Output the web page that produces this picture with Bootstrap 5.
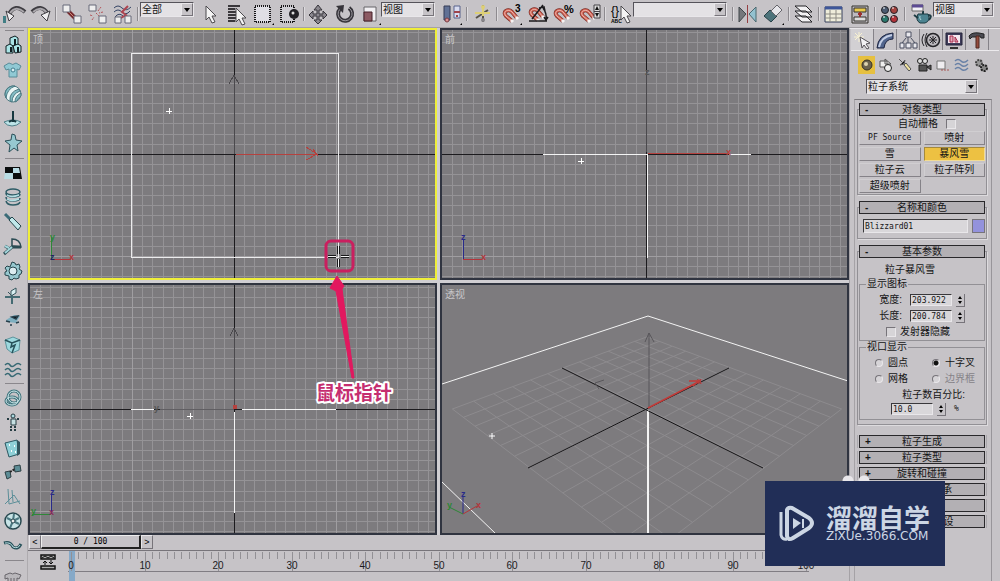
<!DOCTYPE html>
<html lang="zh-CN">
<head>
<meta charset="utf-8">
<meta name="viewport" content="width=device-width, initial-scale=1">
<title>粒子系统 - Blizzard01</title>
<link href="https://cdn.jsdelivr.net/npm/bootstrap@5.3.0/dist/css/bootstrap.min.css" rel="stylesheet">
<script src="https://cdn.jsdelivr.net/npm/bootstrap@5.3.0/dist/js/bootstrap.bundle.min.js"></script>
<style>
:root{--face:#c6c3c7;--dark:#7c797e;--lite:#e9e7ea;--ink:#151516}
body{background:var(--face);color:var(--ink);font-family:"Liberation Sans","Noto Sans CJK SC",sans-serif;font-size:10px;line-height:12px;height:100vh}
.tool{border:0;background:none;padding:0;color:var(--ink);flex:none;display:flex;align-items:center;justify-content:center}
.topbar{height:28px;border-bottom:1px solid #a5a2a6;padding-left:2px}
.topbar .tool{width:26px;height:26px}
.topbar .tool svg{width:24px;height:24px}
.vsep{width:4px;flex:none;height:14px;background:linear-gradient(90deg,transparent 1px,#8d8a8f 1px 2px,#dddbde 2px 3px,transparent 3px)}
.pick{position:relative;flex:none;height:15px;border:1px solid #55535a;border-right-color:var(--lite);border-bottom-color:var(--lite);background:#e4e2e5}
.pick select{appearance:none;background:none;border:0;border-radius:0;width:100%;height:13px;padding:0 14px 0 1px;font-size:10px;line-height:13px;color:var(--ink);display:block}
.pick::after{content:"";position:absolute;right:0;top:0;width:12px;height:13px;pointer-events:none;border:1px solid;border-color:var(--lite) #77747a #77747a var(--lite);background:var(--face)}
.pick::before{content:"";position:absolute;z-index:1;right:3px;top:5px;border:3px solid transparent;border-top:4px solid #000;border-bottom:0;pointer-events:none}
.w-pick{width:54px}.w-name{width:94px}.w-render{width:61px}
.pull{margin-left:-3px}
.sidebar{width:28px;padding-bottom:18px;border-right:1px solid #aeabaf}
.sidebar .tool{flex:1 1 0;min-height:0;width:26px}
.sidebar .tool svg{width:20px;height:20px}
.hsep{height:5px;flex:none;margin:0 3px 0 5px;background:linear-gradient(transparent 2px,#8a878c 2px 3px,transparent 3px)}
.partial{position:absolute;left:0;bottom:-8px;height:18px}
.views{display:grid;grid-template:minmax(0,1fr) minmax(0,1fr) / minmax(0,1fr) minmax(0,1fr);gap:3px;background:#d0ced2}
.view{border:2px solid #303440;background:#7d7b7e;overflow:hidden;min-height:0}
.view.active{border-color:#efee3a}
.view svg,.note svg{display:block;width:100%;height:100%}
.vlabel{font:10px "Noto Sans CJK SC",sans-serif;fill:#c7c6c8}
.axis{font:bold 9px "Liberation Sans",sans-serif}
.note{position:absolute;inset:0;pointer-events:none}
.slider{height:15px;padding-left:1px}
.slider button{border:1px solid;border-color:var(--lite) #77747a #77747a var(--lite);background:var(--face);padding:0;height:14px;font-size:9px;line-height:11px}
.slider .arrow{width:12px}.slider .knob{width:100px;border-width:1px 2px 2px 1px;border-color:#eee #222 #222 #eee}
.mono{font-family:"DejaVu Sans Mono",monospace;font-size:8px}
.slider .knob{font-size:8px}
.time{height:31px;border-top:1px solid #77747a}
.keys{width:40px}
.time svg{display:block}.time .ruler{flex:1;min-width:0;height:30px}
.ruler text{font:10px "Liberation Sans",sans-serif;text-anchor:middle;fill:#1c1b1d}
.panel{width:151px;border-left:1px solid #a5a2a6;border-top:1px solid #e9e7ea}
.tabs{height:22px;border-bottom:1px solid #eceaed;margin:0 1px 0 1px}
.tabs .tool{width:23px;border-right:1px solid #858288}
.tabs .tool:first-child{background:#d2d0d3}
.tabs svg{width:20px;height:20px}
.cats{height:20px;margin:4px 0 0 8px}
.cats .tool{width:19px}.cats svg{width:16px;height:16px}
.cats .on{width:17px;height:18px;background:#e6c040;margin-right:1px}
.kind{margin:4px 22px 5px 16px}
.rolls{margin:0 8px 0 4px;padding:9px 4px 0 2px;border-top:1px solid var(--dark);border-left:1px solid #a5a2a6;border-right:1px solid #98959a;flex:1;min-height:0;overflow:hidden}
.rollout{border:1px solid #929095;box-shadow:1px 1px 0 #dddbde;padding:0 1px;margin-bottom:12px}
.rhead{display:block;width:100%;height:13px;position:relative;margin-top:-7px;border:1px solid #29282b;background:#b3b0b4;color:var(--ink);padding:0;text-align:center;line-height:11px;font-size:10px}
.rhead b{position:absolute;left:5px;top:0}
.shutlist{margin-top:-2px}
.shutlist .rollout{border:0;border-left:1px solid #aaa8ac;border-right:1px solid #aaa8ac;padding:0 1px;margin-bottom:3px;box-shadow:none}
.shutlist .rhead{margin:0}
.auto{height:15px;padding-right:6px}
.kinds{display:grid;grid-template-columns:1fr 1fr;gap:2px 3px;padding-bottom:1px}
.kinds button{height:14px;padding:0;border:1px solid;border-color:#d0ced1 #858288 #858288 #d0ced1;background:var(--face);color:var(--ink);font-size:10px;line-height:12px}
.kinds button.on{background:#edc142;border-color:#a58a3c #f2dc94 #f2dc94 #a58a3c}
.kinds .mono,.rolls input[type=text]{font-family:"DejaVu Sans Mono",monospace;font-size:8px}
.rolls input[type=text]{border:1px solid;border-color:#39383b var(--lite) var(--lite) #39383b;border-radius:0;background:#d9d7da;color:var(--ink);padding:0 1px;line-height:10px}
.naming{padding:5px 0 5px 4px;gap:4px}
.nameval{height:14px;min-width:0;flex:1}
.swatch{width:13px;height:14px;border:1px solid #77747a;background:#9392dc;padding:0}
.num{width:42px;height:12px}
.spin{width:9px;height:13px;border:0;border-right:1px solid #77747a;border-bottom:1px solid #77747a;padding:0;background:var(--face);display:flex}
.rolls fieldset{border:1px solid #929095;padding:2px 3px 0;margin:0;min-width:0}
.rolls legend{float:none;width:auto;font-size:10px;line-height:12px;height:12px;margin:0 0 0 3px;padding:0 1px}
.line{height:16px;display:flex;align-items:center}
.caption{padding:4px 24px 0 0;line-height:16px}
.faint{color:#858288}
.tick{appearance:none;margin:0;border:1px solid;border-color:#77747a var(--lite) var(--lite) #77747a;background:#d6d4d7;width:10px;height:10px}
.dot{appearance:none;margin:0 5px 0 0;width:8px;height:8px;border-radius:50%;border:1px solid;border-color:#77747a var(--lite) var(--lite) #77747a;background:#d6d4d7}
.dot:checked{background:radial-gradient(#111 2px,#d6d4d7 3px)}
.brand{position:absolute;z-index:5;right:55px;bottom:15px;width:180px;height:85px;background:#212e57;color:#ccd6e4;padding-left:14px;gap:11px}
.brand::before{content:"";position:absolute;z-index:-1;left:77px;top:-6px;width:28px;height:6px;background:radial-gradient(circle at 6px 6px,#e9e7ea 5px,transparent 6px),radial-gradient(circle at 22px 6px,#e9e7ea 5px,transparent 6px)}
.brand .big{font:700 26px/26px "Noto Sans CJK SC",sans-serif}
.brand .site{font:12px/13px "DejaVu Sans",sans-serif}
</style>
</head>
<body class="d-flex flex-column overflow-hidden position-relative">
<svg width="0" height="0" class="position-absolute" aria-hidden="true">
<defs>
<g id="magnet"><path d="M12 18 6 13C2 9 8 5 12 9l5 6" fill="none" stroke="#6d2620" stroke-width="4"/><path d="M12 18 6 13C2 9 8 5 12 9l5 6" fill="none" stroke="#cc5d4f" stroke-width="3"/><path d="M12 18 6 13C2 9 8 5 12 9l5 6" fill="none" stroke="#f0bab0" stroke-width="1"/><path d="m11 17 2 2m3-5 2 2" stroke="#f5f3f3" stroke-width="3"/></g>
<g id="pot"><path d="M7 12h10q3 7-3 9H9q-5-3-2-9z" fill="#4c8390" stroke="#1d3b43"/><path d="M7 16 3 13M17 13q5 0 1 5M12 9v3" fill="none" stroke="#1d3b43" stroke-width="2"/><path d="M9 14q-1 2 1 4" fill="none" stroke="#b5d9dd"/></g>
<g id="cursor"><path d="m0 0 10 10H6l3 6-3 1-3-6-3 3z" fill="#f4f4f4" stroke="#4b494d"/></g>
</defs>
</svg>

<header class="topbar d-flex align-items-center flex-nowrap overflow-hidden flex-shrink-0" role="toolbar" aria-label="主工具栏">
<button class="tool" aria-label="撤销"><svg viewBox="0 0 24 24"><path d="M0 14h3v7H0z" fill="#417e85"/><path d="M6 12Q12 1 22 10" fill="none" stroke="#3f3d42" stroke-width="4"/><path d="M7 11Q13 3 21 10" fill="none" stroke="#aaa7ac" stroke-width="2"/><path d="m3 9 3 10 5-5z" fill="#efeef0" stroke="#3f3d42"/></svg></button>
<button class="tool" aria-label="重做"><svg viewBox="0 0 24 24"><path d="M3 10Q12 1 19 12" fill="none" stroke="#3f3d42" stroke-width="4"/><path d="M4 10Q12 3 18 11" fill="none" stroke="#aaa7ac" stroke-width="2"/><path d="m21 9-3 10-6-6z" fill="#efeef0" stroke="#3f3d42"/></svg></button>
<i class="vsep"></i>
<button class="tool" aria-label="链接"><svg viewBox="0 0 24 24"><path d="m9 9 8 8" stroke="#782a2e" stroke-width="4"/><path d="m9 9 8 8" stroke="#ce8a78" stroke-width="1"/><path d="M4 3h7v7H4zM15 14h7v7h-7z" fill="#eee" stroke="#666878"/></svg></button>
<button class="tool" aria-label="取消链接"><svg viewBox="0 0 24 24"><path d="M4 3h7v6H4zM14 14h7v7h-7z" fill="#eee" stroke="#666878"/><path d="m11 11 3 3M16 5l-3 4m5 1-4 1M5 13l3 1m-1 4 2-3" stroke="#b4555a" stroke-dasharray="2 1"/></svg></button>
<button class="tool" aria-label="绑定到空间扭曲"><svg viewBox="0 0 24 24"><path d="M3 6q4-4 8 0t9-1M3 10q4-4 8 0t8-1M4 15q4-5 8-1" fill="none" stroke="#344364" stroke-width="1"/><path d="m17 4-6 6 4 3-9 5" fill="none" stroke="#ad4550" stroke-width="2"/><path d="M4 15h6v6H4zM14 14h6v7h-6z" fill="#eee" stroke="#666878"/></svg></button>
<i class="vsep"></i>
<div class="pick w-pick mb-2 me-1"><select aria-label="选择过滤器"><option>全部</option></select></div>
<button class="tool" aria-label="选择对象"><svg viewBox="0 0 24 24"><use href="#cursor" x="7" y="4"/></svg></button>
<button class="tool" aria-label="按名称选择"><svg viewBox="0 0 24 24"><path d="M3 4h12M3 7h7M3 10h11M3 13h8M3 16h11M3 19h7" stroke="#39373b" stroke-width="2"/><use href="#cursor" x="11" y="6"/></svg></button>
<button class="tool" aria-label="矩形选择区域"><svg viewBox="0 0 24 24"><path d="M4 4h15v16H4z" fill="#e0dfe5" stroke="#171719" stroke-width="2" stroke-dasharray="1 1"/><path d="M23 21v2h-2z"/></svg></button>
<button class="tool" aria-label="窗口/交叉"><svg viewBox="0 0 24 24"><path d="M4 4h13v16H4z" fill="#d0cfd5" stroke="#171719" stroke-width="2" stroke-dasharray="1 1"/><circle cx="17" cy="12" r="5" fill="#222126"/><circle cx="16" cy="11" r="1.500" fill="#ddd"/></svg></button>
<i class="vsep"></i>
<button class="tool" aria-label="移动"><svg viewBox="0 0 24 24"><path d="m11 3 4 5h-3v4h4V9l4 4-4 4v-3h-4v4h3l-4 4-4-4h3v-4H6v3l-4-4 4-4v3h4V8H7z" fill="#8b888f" stroke="#36343a"/></svg></button>
<button class="tool" aria-label="旋转"><svg viewBox="0 0 24 24"><path d="M7 7a7 7 0 1 0 9-1" fill="none" stroke="#36343a" stroke-width="4"/><path d="M7 7a7 7 0 1 0 9-1" fill="none" stroke="#99969c" stroke-width="1"/><path d="m3 4 8-1-1 8z" fill="#36343a"/></svg></button>
<button class="tool" aria-label="缩放"><svg viewBox="0 0 24 24"><path d="M5 5h12v14H5z" fill="#f1eff2" stroke="#666469"/><path d="M5 10h8v9H5z" fill="#8c5a62" stroke="#462129"/><path d="M22 21v2h-2z"/></svg></button>
<div class="pick w-pick mb-2 pull me-1"><select aria-label="参考坐标系"><option>视图</option></select></div>
<button class="tool" aria-label="使用轴点中心"><svg viewBox="0 0 24 24"><path d="M4 4h6v14H4z" fill="#617195" stroke="#343b55"/><path d="M14 4h6v12h-6z" fill="#d8dcf0" stroke="#58628b"/><circle cx="7" cy="18" r="2" fill="#d89090" stroke="#7b3a42"/><path d="M14 10h6m-4 4h2" stroke="#9e454c" stroke-width="2"/><path d="M22 21v2h-2z"/></svg></button>
<i class="vsep"></i>
<button class="tool" aria-label="选择并操纵"><svg viewBox="0 0 24 24"><path d="M13 3v17M6 16l12-8" stroke="#565349" stroke-width="2"/><path d="M5 11h15M13 5v9" stroke="#ddcf75" stroke-width="2"/><circle cx="13" cy="5" r="2" fill="#ddcf75"/><circle cx="13" cy="18" r="2" fill="#87858a"/></svg></button>
<i class="vsep"></i>
<button class="tool" aria-label="捕捉开关"><svg viewBox="0 0 24 24"><use href="#magnet" x="0" y="1"/><text x="15" y="10" font-size="10" font-weight="bold">3</text><path d="M22 21v2h-2z"/></svg></button>
<button class="tool" aria-label="角度捕捉"><svg viewBox="0 0 24 24"><use href="#magnet" x="0" y="0"/><path d="M3 19h18M6 17 17 3m0 3q4 5 3 12m-7-12 5-1 1 4m-1 6 2 3 2-3" fill="none" stroke="#1c1b1e" stroke-width="1.500"/></svg></button>
<button class="tool" aria-label="百分比捕捉"><svg viewBox="0 0 24 24"><use href="#magnet" x="-1" y="1"/><text x="12" y="11" font-size="11" font-weight="bold">%</text></svg></button>
<button class="tool" aria-label="微调器捕捉"><svg viewBox="0 0 24 24"><use href="#magnet" x="-1" y="1"/><path d="M16 3h6v13h-6zM16 9.500h6" fill="#ddd" stroke="#444247"/><path d="m19 4 2 4h-4zm0 11 2-4h-4z" fill="#111"/></svg></button>
<i class="vsep"></i>
<button class="tool" aria-label="命名选择集"><svg viewBox="0 0 24 24"><text x="3" y="13" font-size="12">{}</text><text x="3" y="21" font-size="5" font-weight="bold">ABC</text><use href="#cursor" x="13" y="4"/></svg></button>
<div class="pick w-name mb-2 me-1"><select aria-label="命名选择集列表"><option></option></select></div>
<i class="vsep"></i>
<button class="tool" aria-label="镜像"><svg viewBox="0 0 24 24"><path d="m3 5 7 7-7 8z" fill="#74777b" stroke="#41474a"/><path d="m20 5-7 7 7 8z" fill="#93c1cf" stroke="#4a686f"/><path d="M11.500 3v18" stroke="#963e42"/></svg></button>
<button class="tool" aria-label="对齐"><svg viewBox="0 0 24 24"><path d="m2 14 6-6 7 6-6 6z" fill="#4d737b" stroke="#274047"/><path d="m9 9 6-6 5 5-6 6z" fill="#e7e6eb" stroke="#66656b"/><path d="M22 21v2h-2z"/></svg></button>
<i class="vsep"></i>
<button class="tool" aria-label="层管理器"><svg viewBox="0 0 24 24"><path d="M3 14h11l6 6H10zM3 9h11l6 6H10zM3 4h11l6 6H10z" fill="#f2f1f3" stroke="#232226"/></svg></button>
<i class="vsep"></i>
<button class="tool" aria-label="曲线编辑器"><svg viewBox="0 0 24 24"><path d="M3 5h17v15H3z" fill="#efedda" stroke="#36405e"/><path d="M3 6h17" stroke="#3e569a" stroke-width="3"/><path d="M8 8v12M3 12h17M3 16h17M14 8v12" stroke="#8d8b83"/></svg></button>
<button class="tool" aria-label="图解视图"><svg viewBox="0 0 24 24"><path d="M4 4h16v17H4z" fill="#bdbac0" stroke="#35332c"/><path d="M6 6h12v4H6z" fill="#ebcb4d" stroke="#35332c"/><path d="M6 15h12v4H6z" fill="#ddd" stroke="#35332c"/><path d="M12 10v5m-2-3h4" stroke="#9a302f" stroke-width="2"/></svg></button>
<i class="vsep"></i>
<button class="tool" aria-label="材质编辑器"><svg viewBox="0 0 24 24"><g stroke="#222228"><circle cx="7" cy="8" r="3.500" fill="#4b5b70"/><circle cx="16" cy="8" r="3.500" fill="#a5423e"/><circle cx="7" cy="17" r="3.500" fill="#2a776c"/><circle cx="16" cy="17" r="3.500" fill="#b23138"/></g><path d="M5 6h2m7 0h2m-11 9h2m7 0h2" stroke="#fff"/></svg></button>
<i class="vsep"></i>
<button class="tool" aria-label="渲染场景"><svg viewBox="0 0 24 24"><use href="#pot" x="3" y="0"/><path d="M4 3h11v6H4z" fill="#f2f1f6" stroke="#666"/><path d="M4 4h11" stroke="#5c4b93" stroke-width="3"/></svg></button>
<div class="pick w-render mb-2"><select aria-label="渲染视口"><option>视图</option></select></div>
<button class="tool" aria-label="快速渲染"><svg viewBox="0 0 24 24"><use href="#pot" x="4" y="0"/></svg></button>
</header>

<div class="d-flex flex-grow-1 overflow-hidden">
<nav class="sidebar d-flex flex-column flex-shrink-0 position-relative overflow-hidden" aria-label="reactor 工具栏">
<div class="hsep"></div>
<button class="tool" aria-label="刚体集合"><svg viewBox="0 0 20 20"><path d="m7 3 5-2 3 2v7l-4 1-4-1z" fill="#a9e4e6" stroke="#101e22"/><path d="m3 11 4-2 3 2v7H3zM10 11l5-2 3 2v6l-6 1z" fill="#a9e4e6" stroke="#101e22"/><path d="M12 4v6M8 12v5m7-5v5" stroke="#101e22" stroke-width="2"/></svg></button>
<button class="tool" aria-label="布料集合"><svg viewBox="0 0 20 20"><path d="m1 6 5-3q4 3 7 0l5 3-2 4-2-1v8H6V9L3 10z" fill="#90c9d4" stroke="#598c98"/><circle cx="10" cy="10" r="2" fill="#d8edf1" stroke="#3f7c8c"/></svg></button>
<button class="tool" aria-label="软体集合"><svg viewBox="0 0 20 20"><circle cx="10" cy="10" r="8" fill="#e9f5f5" stroke="#4b7881"/><path d="M7 17Q6 8 16 5l1 2Q9 10 9 18zM3 14Q4 5 12 2L9 2Q2 4 2 11zM12 18q0-6 6-9v3q-3 2-4 5z" fill="#83bdc5" stroke="#4b7881"/></svg></button>
<button class="tool" aria-label="绳索集合"><svg viewBox="0 0 20 20"><path d="M1 13q9-4 17 0-4 4-9 4t-8-4z" fill="#bde4e8" stroke="#4e7f89"/><path d="M10 2v11m-4 0q4-3 7 0" fill="none" stroke="#17383f" stroke-width="2"/></svg></button>
<button class="tool" aria-label="变形网格集合"><svg viewBox="0 0 20 20"><path d="m9 1 3 1 1 5 6 1-5 4 1 6-4-3-5 4 1-7-5-4 6-1z" fill="#96c8d0" stroke="#2b5059"/></svg></button>
<div class="hsep"></div>
<button class="tool" aria-label="平面"><svg viewBox="0 0 20 20"><path d="M2 4h15l2 12H2z" fill="#0b0d0e"/><path d="M10 5h6l1 5h-7zM2 10h8v6H1z" fill="#b9dce4"/></svg></button>
<button class="tool" aria-label="弹簧"><svg viewBox="0 0 20 20"><g fill="none" stroke="#2d5c66" stroke-width="1.500"><ellipse cx="10" cy="5" rx="7" ry="3"/><path d="M3 6q0 4 7 4t7-3M3 10q0 4 7 4t7-3M3 14q1 4 7 4t7-3"/></g><path d="M4 8q4 3 12 0M4 12q4 3 12 0" fill="none" stroke="#b2dfe3" stroke-width="1.500"/></svg></button>
<button class="tool" aria-label="线性缓冲器"><svg viewBox="0 0 20 20"><path d="m2 2 6 6" stroke="#3b6c78" stroke-width="3"/><path d="m6 8 3-3 9 9-3 4z" fill="#c0e8ea" stroke="#26464d"/></svg></button>
<button class="tool" aria-label="角度缓冲器"><svg viewBox="0 0 20 20"><path d="M9 9V2q8 0 9 8z" fill="#d5c9cd" stroke="#2b4b53" stroke-width="1.500"/><path d="m1 17 8-7h9M2 9l5 3" fill="none" stroke="#2b4b53" stroke-width="3"/><path d="m2 16 7-6M2 9l4 2" stroke="#a4d6dc" stroke-width="2"/></svg></button>
<button class="tool" aria-label="马达"><svg viewBox="0 0 20 20"><path d="m9 1 3 1 1 2 3-1 1 3-1 2 3 2-1 3-2 1v3l-3 1-2-1-2 2-3-1v-3l-4-1v-3l2-1-2-3 2-2 3 1z" fill="#97c8cf" stroke="#25454c"/><circle cx="10" cy="10" r="4" fill="#dbecf0" stroke="#25454c"/></svg></button>
<button class="tool" aria-label="风"><svg viewBox="0 0 20 20"><path d="M2 11h15M9 9v9" stroke="#456b73" stroke-width="2"/><path d="M8 10V5l5-3v5zM5 6l3 3" fill="#d7eef1" stroke="#35545b"/></svg></button>
<button class="tool" aria-label="玩具车"><svg viewBox="0 0 20 20"><path d="m3 10 8-5 6 1-4 7-8-1z" fill="#7fafc0"/><path d="m9 7 6-1-2 3zM3 11l4 1m0 3h2m4-2 3-1" stroke="#253d49" stroke-width="1.500"/></svg></button>
<button class="tool" aria-label="破裂"><svg viewBox="0 0 20 20"><path d="m2 5 8-3 7 3-1 10-7 3-5-4z" fill="#9ed9df" stroke="#5d939c"/><path d="M2 5l7 3 8-3M9 8l-1 4 4-2-3 8" fill="none" stroke="#28525b" stroke-width="1.500"/></svg></button>
<button class="tool" aria-label="水"><svg viewBox="0 0 20 20"><path d="M2 6q3-3 5 0t5 0 6 0M2 11q3-3 5 0t5 0 6 0M2 16q3-3 5 0t5 0 6 0" fill="none" stroke="#356873" stroke-width="1.500"/></svg></button>
<div class="hsep"></div>
<button class="tool" aria-label="约束解算器"><svg viewBox="0 0 20 20"><circle cx="11" cy="8" r="6" fill="none" stroke="#3f737c" stroke-width="3"/><ellipse cx="9" cy="12" rx="6" ry="4" fill="none" stroke="#3f737c" stroke-width="3"/><circle cx="11" cy="8" r="6" fill="none" stroke="#d3edf0"/><ellipse cx="9" cy="12" rx="6" ry="4" fill="none" stroke="#d3edf0"/></svg></button>
<button class="tool" aria-label="碎布玩偶"><svg viewBox="0 0 20 20"><circle cx="10" cy="3" r="2" fill="#abd9df" stroke="#263c43"/><path d="M8 6h5v6H8z" fill="#c5dfe2" stroke="#263c43"/><path d="M4 6h3m7 0h3M8 13v5m4-5v5" stroke="#263c43" stroke-width="2" stroke-dasharray="2 1"/></svg></button>
<button class="tool" aria-label="铰链"><svg viewBox="0 0 20 20"><path d="m2 5 12-3 2 14-10 3z" fill="#8fd0d7" stroke="#2c5761"/><path d="m14 2 3 2v12l-3 2" fill="#33565e"/><path d="M6 7h1m4 1h1m-4 5h1m3 1h1" stroke="#fff" stroke-width="2"/></svg></button>
<button class="tool" aria-label="点到点"><svg viewBox="0 0 20 20"><path d="m11 4 6-1 1 6-6 1zM2 10l5-1 1 6-4 2z" fill="#5d8d96" stroke="#2c3f44"/><path d="m7 10 5-3" stroke="#222" stroke-width="2" stroke-dasharray="2 1"/></svg></button>
<button class="tool" aria-label="棱柱"><svg viewBox="0 0 20 20"><path d="m5 2 1 15 11-3M9 3l1 12M2 17l9-9 6 9" fill="none" stroke="#5b8e98" stroke-width="1"/></svg></button>
<button class="tool" aria-label="车轮"><svg viewBox="0 0 20 20"><circle cx="10" cy="10" r="8" fill="#c8e4e7" stroke="#27474f" stroke-width="1.500"/><path d="m10 10-6-3m6 3 1-7m-1 7 6 3m-6-3-3 7m3-7 6-3" stroke="#4b7881" stroke-width="2"/><circle cx="10" cy="10" r="2" fill="#eee" stroke="#27474f"/></svg></button>
<button class="tool" aria-label="点到路径"><svg viewBox="0 0 20 20"><path d="M1 7q6-2 9 4 5 3 8-3" fill="none" stroke="#265059" stroke-width="3"/><path d="M2 7q6-1 8 4 5 2 7-2" fill="none" stroke="#bde0e4"/></svg></button>
<div class="hsep"></div>
<button class="tool partial" aria-label="布料修改器"><svg viewBox="0 0 20 20"><path d="m2 5 5-2q3 2 5 0l6 2-2 4-2-1v9H5V8L2 9zM8 8v9m3-9v9" fill="#b9b7bb" stroke="#68656b"/></svg></button>
</nav>

<main class="d-flex flex-column flex-grow-1 overflow-hidden">
<div class="views flex-grow-1 position-relative overflow-hidden">
<div class="view active"><svg viewBox="30 30 405 248" preserveAspectRatio="xMidYMid slice" shape-rendering="crispEdges">
<g data-grid="30,30,405,248,234,154"></g>
<path d="M234 30v248M30 154h405" stroke="#1c1b1e"/><path d="M131 53h207v204H131z" fill="none" stroke="#ececed"/>
<path d="M234 154V76m-5 8 5-9 5 9" fill="none" stroke="#4b494d"/><path d="M236 154h80m-10-7 11 7-11 6m7-11 5 7" fill="none" stroke="#b5413e"/>
<path d="M166 111h6m-3-3v6" stroke="#fff"/><text class="vlabel" x="33" y="43">顶</text>
<path d="M51 259v-22" stroke="#2e8737"/><path d="M51 259h20" stroke="#b4343a"/><text class="axis" x="50" y="240" fill="#2e8737">y</text><text class="axis" x="69" y="260" fill="#b4343a">x</text><text class="axis" x="50" y="260" fill="#1e2560">z</text>
</svg></div>
<div class="view"><svg viewBox="442 30 405 248" preserveAspectRatio="xMidYMid slice" shape-rendering="crispEdges">
<g data-grid="442,30,405,248,646,154"></g>
<path d="M646 30v248M442 154h405" stroke="#1c1b1e"/><path d="M646 152V70" stroke="#4b494d"/><path d="M543 154h104m82 0h22M647 154v104" stroke="#f4f4f4"/><path d="M648 153h80" stroke="#b5413e"/><text class="axis" x="726" y="155" fill="#b5413e">x</text><text class="axis" x="645" y="75" fill="#555">z</text>
<path d="M578 161h6m-3-3v6" stroke="#fff"/><text class="vlabel" x="445" y="43">前</text>
<path d="M463 259v-20" stroke="#282a8a"/><path d="M463 259h19" stroke="#b4343a"/><text class="axis" x="461" y="240" fill="#282a8a">z</text><text class="axis" x="481" y="260" fill="#b4343a">x</text>
</svg></div>
<div class="view"><svg viewBox="30 285 405 248" preserveAspectRatio="xMidYMid slice" shape-rendering="crispEdges">
<g data-grid="30,285,405,248,234,409"></g>
<path d="M234 285v248M30 409h405" stroke="#1c1b1e"/><path d="M234 405v-77m-4 8 4-8 4 8" fill="none" stroke="#4b494d"/><path d="M160 409h74" stroke="#605e62"/><path d="M131 409h23m88 0h94M234 412v101" stroke="#f4f4f4"/><text class="axis" x="154" y="411" fill="#555">y</text><path d="M233 405h4v4h-4z" fill="#b5413e"/>
<path d="M187 416h6m-3-3v6" stroke="#fff"/><text class="vlabel" x="33" y="298">左</text>
<path d="M51 514v-20" stroke="#282a8a"/><path d="M51 514H32" stroke="#2e8737"/><text class="axis" x="50" y="495" fill="#282a8a">z</text><text class="axis" x="31" y="514" fill="#2e8737">y</text><text class="axis" x="49" y="515" fill="#8c2b5b">x</text>
</svg></div>
<div class="view"><svg viewBox="442 285 405 248" preserveAspectRatio="xMidYMid slice">
<g id="persp"></g>
<path d="m442 384 206-68 200 65M442 482l53 51" fill="none" stroke="#f4f4f4"/><path d="M648 410v124" stroke="#f4f4f4" stroke-width="2"/><path d="m562 368 201 100M528 468l201-100" stroke="#161517"/><path d="M649 409v-76m-4 9 4-9 5 9m-59 41 9-3m-9 3 4 6" fill="none" stroke="#59575b"/><path d="m648 408 52-27m-11 0h12m-8 5 7-6" fill="none" stroke="#c23a38" stroke-width="1.500"/><text class="axis" x="697" y="384" fill="#b5413e">x</text>
<path d="M489 436h6m-3-3v6" stroke="#fff"/><text class="vlabel" x="445" y="298">透视</text>
<path d="M463 514v-18" stroke="#282a8a"/><path d="m463 514 14-8" stroke="#b4343a"/><path d="m463 514-14-7" stroke="#2e8737"/><text class="axis" x="461" y="497" fill="#282a8a">z</text><text class="axis" x="476" y="508" fill="#b4343a">x</text><text class="axis" x="447" y="508" fill="#2e8737">y</text>
</svg></div>
<div class="note"><svg viewBox="28 28 821 507" preserveAspectRatio="xMidYMid slice">
<path d="M328 256.500h8m5 0h8M338.500 246v8m0 5v8" stroke="#1a1a1c" stroke-width="3"/><path d="M328 256.500h8m5 0h8M338.500 246v8m0 5v8" stroke="#f4f4f4"/>
<rect x="326" y="241" width="27" height="30" rx="5" fill="none" stroke="#ca1f5f" stroke-width="3"/>
<path d="m337 276 7 10-2 3 12 89h-2l-16-87-6-3z" fill="#e2185f" stroke="#e2185f"/>
<text x="316" y="400" font-family="Noto Sans CJK SC" font-weight="700" font-size="19" fill="#c52e70" stroke="#fff" stroke-width="4" stroke-linejoin="round" paint-order="stroke">鼠标指针</text>
</svg></div>
</div>
<div class="slider d-flex flex-shrink-0"><button class="arrow" aria-label="上一帧">&lt;</button><button class="knob mono">0 / 100</button><button class="arrow" aria-label="下一帧">&gt;</button></div>
<div class="time d-flex flex-shrink-0">
<button class="tool keys" aria-label="打开迷你曲线编辑器"><svg width="16" height="16" viewBox="0 0 16 16" class="mb-2"><path d="M1 1h14v4H1zM1 12h14v3H1z" fill="#aaa" stroke="#111" stroke-width="1.500"/><path d="m2 4 3-2 3 2 3-2 3 2M5 11V7m-2 2 2-2 2 2m4-3v4m-2-2 2 2 2-2" fill="none" stroke="#111"/></svg></button>
<svg class="ruler" viewBox="68 551 781 30" preserveAspectRatio="xMinYMid slice"><path d="M68 571.500h741" stroke="#807d83"/><rect x="69" y="551" width="6" height="30" fill="#86a9c8"/><g id="ticks"></g></svg>
</div>
</main>

<aside class="panel d-flex flex-column flex-shrink-0 overflow-hidden">
<div class="tabs d-flex flex-shrink-0">
<button class="tool" aria-label="创建"><svg viewBox="0 0 20 20"><path d="M7 2v10M2 7h10M3 3l7 7m0-7-7 7" stroke="#f9f2d2"/><path d="m8 7 10 6-4 1 3 4-2 1-3-4-2 3z" fill="#f2f1f3" stroke="#555258"/></svg></button>
<button class="tool" aria-label="修改"><svg viewBox="0 0 20 20"><path d="M2 18Q3 4 18 3v6Q10 9 9 18z" fill="#52658d" stroke="#1d2440"/><path d="M4 17Q6 7 17 5" fill="none" stroke="#c5cfe5" stroke-width="2"/></svg></button>
<button class="tool" aria-label="层次"><svg viewBox="0 0 20 20"><path d="M8 2h5v5H8zM2 13h4v5H2zM8 13h5v5H8zM15 13h4v5h-4zM10 7v6M8 8l-4 5m9-5 4 5" fill="#e9e8ed" stroke="#4b4f60"/></svg></button>
<button class="tool" aria-label="运动"><svg viewBox="0 0 20 20"><circle cx="12" cy="10" r="6.500" fill="#bab7bc" stroke="#242327" stroke-width="1.500"/><path d="M8 10h8m-4-4v8m-3-7 6 6m0-6-6 6M3 4q-4 6 0 12M6 3q-4 7 0 14" fill="none" stroke="#242327"/></svg></button>
<button class="tool" aria-label="显示"><svg viewBox="0 0 20 20"><path d="M2 3h16v12H2z" fill="#3e3b59" stroke="#25243b"/><path d="M4 5h12v8H4z" fill="#f5e8ef"/><path d="M6 6h3v6H6zm5 6V7l3 5z" fill="#e0a9ba" stroke="#a92d4d"/><path d="M6 18h8" stroke="#333" stroke-width="2"/></svg></button>
<button class="tool" aria-label="工具"><svg viewBox="0 0 20 20"><path d="M2 6q3-4 10-3l5 1v4h-3l-1-2-4 1-4 0-2 2z" fill="#4b4b53" stroke="#222"/><path d="M9 6h3v12H9z" fill="#954b3c" stroke="#4f2820"/></svg></button>
</div>
<div class="cats d-flex align-items-center flex-shrink-0">
<button class="tool on" aria-label="几何体"><svg viewBox="0 0 16 16"><circle cx="8" cy="8" r="5" fill="#6b6350" stroke="#353126"/><circle cx="7" cy="7" r="2" fill="#ddd4af"/></svg></button>
<button class="tool" aria-label="图形"><svg viewBox="0 0 16 16"><path d="M2 4h7v6H2zM7 2l6 5H7z" fill="#eee" stroke="#555"/><circle cx="10" cy="11" r="3.500" fill="#eee" stroke="#222"/></svg></button>
<button class="tool" aria-label="灯光"><svg viewBox="0 0 16 16"><path d="m2 2 6 6m0-5-1 4-4 1" stroke="#555"/><path d="m7 8 2-2 5 6-2 2z" fill="#efe2a0" stroke="#555"/></svg></button>
<button class="tool" aria-label="摄影机"><svg viewBox="0 0 16 16"><circle cx="4" cy="4" r="2.500" fill="#ddd" stroke="#222"/><circle cx="9" cy="4" r="2.500" fill="#ddd" stroke="#222"/><path d="M3 8h8v6H3zm8 2 4-2v5z" fill="#555" stroke="#222"/></svg></button>
<button class="tool" aria-label="辅助对象"><svg viewBox="0 0 16 16"><path d="M2 4h8v8H2z" fill="#efedf0" stroke="#777"/><path d="M6 13h9" stroke="#a75654" stroke-dasharray="2 1"/></svg></button>
<button class="tool" aria-label="空间扭曲"><svg viewBox="0 0 16 16"><path d="M1 4q3-3 6 0t7-1M1 8q3-3 6 0t7-1M1 12q3-3 6 0t7-1" fill="none" stroke="#6880a6" stroke-width="1.500"/></svg></button>
<button class="tool" aria-label="系统"><svg viewBox="0 0 16 16"><circle cx="6" cy="6" r="3" fill="#999" stroke="#444" stroke-width="2" stroke-dasharray="2 1"/><circle cx="11" cy="11" r="3" fill="#888" stroke="#222" stroke-width="2" stroke-dasharray="2 1"/></svg></button>
</div>
<div class="pick kind flex-shrink-0"><select aria-label="类别"><option>粒子系统</option></select></div>
<div class="rolls">
<section class="rollout"><button class="rhead"><b>-</b>对象类型</button>
<div class="auto d-flex align-items-center justify-content-center ps-3"><label for="auto" class="me-2">自动栅格</label><input class="tick" type="checkbox" id="auto"></div>
<div class="kinds"><button class="mono">PF Source</button><button>喷射</button><button>雪</button><button class="on">暴风雪</button><button>粒子云</button><button>粒子阵列</button><button>超级喷射</button></div></section>
<section class="rollout"><button class="rhead"><b>-</b>名称和颜色</button>
<div class="naming d-flex"><input class="nameval" type="text" value="Blizzard01" aria-label="名称"><button class="swatch" aria-label="颜色"></button></div></section>
<section class="rollout pb-1"><button class="rhead"><b>-</b>基本参数</button>
<div class="caption text-center">粒子暴风雪</div>
<fieldset><legend>显示图标</legend>
<div class="line justify-content-end pe-3 gap-1"><label for="w" class="me-1">宽度:</label><input class="num" type="text" id="w" value="203.922"><button class="spin" aria-label="调整宽度"><svg viewBox="0 0 8 12"><path d="m4 2 2 3H2zm0 8 2-3H2z"/></svg></button></div>
<div class="line justify-content-end pe-3 gap-1"><label for="l" class="me-1">长度:</label><input class="num" type="text" id="l" value="200.784"><button class="spin" aria-label="调整长度"><svg viewBox="0 0 8 12"><path d="m4 2 2 3H2zm0 8 2-3H2z"/></svg></button></div>
<div class="line justify-content-center gap-1 pe-2"><input class="tick" type="checkbox" id="hide"><label for="hide">发射器隐藏</label></div>
</fieldset>
<fieldset><legend>视口显示</legend>
<div class="row g-0 ps-2 ms-1"><div class="col-6 line"><input class="dot" type="radio" name="disp" id="d1"><label for="d1">圆点</label></div><div class="col-6 line ps-1"><input class="dot" type="radio" name="disp" id="d2" checked><label for="d2">十字叉</label></div>
<div class="col-6 line"><input class="dot" type="radio" name="disp" id="d3"><label for="d3">网格</label></div><div class="col-6 line ps-1"><input class="dot" type="radio" name="disp" id="d4" disabled><label for="d4" class="faint">边界框</label></div></div>
<div class="line justify-content-end pe-3"><label for="pct">粒子数百分比:</label></div>
<div class="line gap-1 ps-4 pb-1"><input class="num ms-1" type="text" id="pct" value="10.0"><button class="spin" aria-label="调整百分比"><svg viewBox="0 0 8 12"><path d="m4 2 2 3H2zm0 8 2-3H2z"/></svg></button><span class="mono ms-1">%</span></div>
</fieldset></section>
<div class="shutlist">
<section class="rollout"><button class="rhead"><b>+</b>粒子生成</button></section>
<section class="rollout"><button class="rhead"><b>+</b>粒子类型</button></section>
<section class="rollout"><button class="rhead"><b>+</b>旋转和碰撞</button></section>
<section class="rollout"><button class="rhead">对象运动继承</button></section>
<section class="rollout"><button class="rhead" aria-label="粒子繁殖"></button></section>
<section class="rollout"><button class="rhead">加载/保存预设</button></section>
</div>
</div>
</aside>
</div>

<div class="brand d-flex align-items-center">
<svg width="36" height="38" viewBox="0 0 36 38" fill="none" stroke="#ccd6e4"><path d="M2 7v23q1 5 6 4" stroke-width="3"/><path d="M8 31V5q1-3 5-2l17 10q6 5 0 10L14 33q-5 3-6-2z" stroke-width="4" stroke-linejoin="round"/><path d="m14 13 8 5-8 6z" fill="#ccd6e4" stroke="none"/><path d="M24 14v9" stroke-width="2"/></svg>
<div><div class="big text-nowrap">溜溜自学</div><div class="site">ZiXUe.3066.COM</div></div>
</div>

<script>
const NS='http://www.w3.org/2000/svg';
function add(parent,tag,attrs,text){const e=document.createElementNS(NS,tag);for(const k in attrs)e.setAttribute(k,attrs[k]);if(text!==undefined)e.textContent=text;parent.appendChild(e);}
// orthographic home grids, ten world units per cell
document.querySelectorAll('[data-grid]').forEach(g=>{
  const [x,y,w,h,cx,cy]=g.dataset.grid.split(',').map(Number),s=10.2;
  let thin='',bold='';
  for(let i=-20;i<=20;i++){
    const px=Math.round(cx+i*s),py=Math.round(cy+i*s);let d='';
    if(px>x&&px<x+w)d+=`M${px} ${y}v${h}`;
    if(py>y&&py<y+h)d+=`M${x} ${py}h${w}`;
    if(i%10)thin+=d;else bold+=d;
  }
  add(g,'path',{d:thin,stroke:'#959396'});add(g,'path',{d:bold,stroke:'#a09ea1'});
});
// perspective home grid
const P=(u,v)=>{const t=u+v,k=1-.172*t;return (647+97.3*(u-v)/k).toFixed(1)+' '+(409+48.5*t/k).toFixed(1);};
let d='';for(let i=-6;i<=6;i++){const a=i/6;d+='M'+P(a,-1)+'L'+P(a,1)+'M'+P(-1,a)+'L'+P(1,a);}
add(document.getElementById('persp'),'path',{d:d,stroke:'#8d8b8e',fill:'none'});
// frame ruler
const T=document.getElementById('ticks');let t='';
for(let i=0;i<=100;i++){const x=Math.round(71+7.35*i)+.5;t+=`M${x} 552v${i%10?7:19}`;}
add(T,'path',{d:t,stroke:'#929095'});
for(let i=0;i<=100;i+=10)add(T,'text',{x:Math.round(71+7.35*i),y:569},i);
</script>
</body>
</html>
